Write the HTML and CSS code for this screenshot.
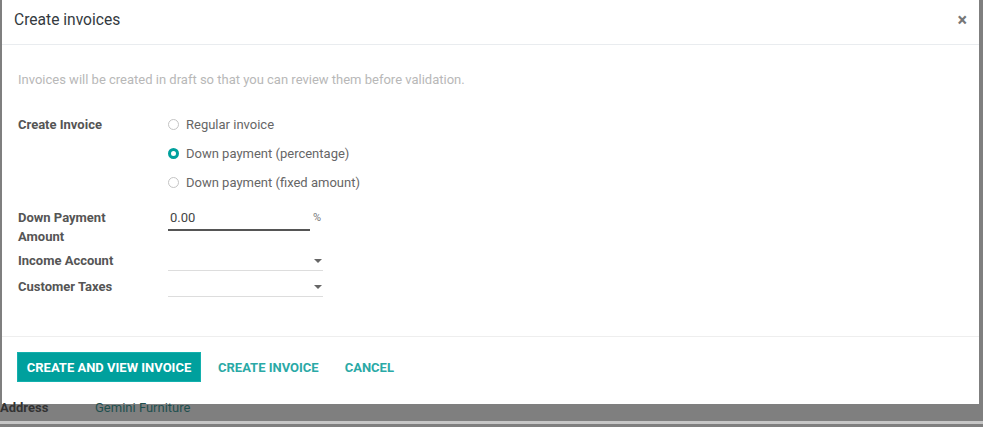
FILE: index.html
```html
<!DOCTYPE html>
<html lang="en">
  <head>
    <meta charset="UTF-8" />
    <meta name="viewport" content="width=device-width, initial-scale=1.0" />
    <title>Create invoices</title>
    <link rel="stylesheet" href="styles.css">
  </head>
  <body>
    <div class="modal">
      <div class="modal-header">
        <h4 class="modal-title">Create invoices</h4>
        <span class="close">&times;</span>
      </div>

      <div class="modal-body">
        <p class="help">Invoices will be created in draft so that you can review them before validation.</p>

        <div class="field invoice-type">
          <label class="field-label">Create Invoice</label>
          <div class="radios">
            <div class="radio"><span class="dot"></span>Regular invoice</div>
            <div class="radio"><span class="dot checked"></span>Down payment (percentage)</div>
            <div class="radio"><span class="dot"></span>Down payment (fixed amount)</div>
          </div>
        </div>

        <div class="field amount">
          <label class="field-label">Down Payment<br />Amount</label>
          <div class="amount-input">
            <span class="input">0.00</span>
            <span class="unit">%</span>
          </div>
        </div>

        <div class="field select-row">
          <label class="field-label">Income Account</label>
          <div class="select"><span class="caret"></span></div>
        </div>

        <div class="field select-row">
          <label class="field-label">Customer Taxes</label>
          <div class="select"><span class="caret"></span></div>
        </div>
      </div>

      <div class="modal-footer">
        <button class="btn btn-primary">Create and View Invoice</button>
        <button class="btn btn-link">Create Invoice</button>
        <button class="btn btn-link">Cancel</button>
      </div>
    </div>

    <div class="backdrop-row">
      <span class="bg-label">Address</span>
      <span class="bg-value">Gemini Furniture</span>
    </div>
  </body>
</html>
```

FILE: styles.css
```css
body {
  margin: 0;
  background: #7f7f7f;
  font-family: Roboto, "Liberation Sans", sans-serif;
  font-size: 13px;
  color: #4c4c4c;
}
.modal {
  margin-left: 2px;
  width: 977px;
  height: 404px;
  background: #fff;
  display: flex;
  flex-direction: column;
}
.modal-header {
  height: 45px;
  box-sizing: border-box;
  padding: 0 12px 4px 12px;
  display: flex;
  align-items: center;
  justify-content: space-between;
  border-bottom: 1px solid #e9ecef;
}
.modal-title {
  margin: 0;
  font-size: 15.6px;
  font-weight: normal;
  color: #343a40;
}
.close {
  font-size: 18px;
  font-weight: bold;
  color: #777;
  line-height: 1;
}
.modal-body {
  height: 292px;
  box-sizing: border-box;
  padding: 26px 16px 0 16px;
  border-bottom: 1px solid #eeeeee;
}
.help {
  margin: 0 0 21px 0;
  line-height: 18px;
  color: #b8b8b8;
}
.field {
  display: flex;
}
.field-label {
  width: 150px;
  flex: none;
  font-weight: bold;
  line-height: 19px;
  color: #555;
}
.invoice-type .field-label {
  margin-top: 5px;
}
.radio {
  height: 29px;
  display: flex;
  align-items: center;
  color: #666;
}
.dot {
  width: 11px;
  height: 11px;
  box-sizing: border-box;
  border: 1px solid #c4c4c4;
  border-radius: 50%;
  margin-right: 7px;
}
.dot.checked {
  border: 3.5px solid #00a09d;
  background: #fff;
}
.amount {
  margin-top: 11px;
}
.amount-input {
  display: flex;
  align-items: flex-start;
}
.input {
  width: 142px;
  height: 23px;
  box-sizing: border-box;
  padding-left: 2px;
  border-bottom: 2px solid #555;
  line-height: 19px;
  color: #444;
}
.unit {
  margin-left: 3px;
  font-size: 11px;
  line-height: 19px;
  color: #777;
}
.select-row {
  margin-top: 5px;
}
.select-row + .select-row {
  margin-top: 6px;
}
.select {
  width: 155px;
  height: 20px;
  box-sizing: border-box;
  border-bottom: 1px solid #ddd;
  display: flex;
  justify-content: flex-end;
  align-items: center;
}
.caret {
  width: 0;
  height: 0;
  margin-right: 1px;
  border-left: 4px solid transparent;
  border-right: 4px solid transparent;
  border-top: 4px solid #666;
}
.modal-footer {
  padding: 15px 15px;
  display: flex;
  align-items: flex-start;
}
.btn {
  height: 30px;
  border: 0;
  background: none;
  font-family: Roboto, "Liberation Sans", sans-serif;
  font-size: 13px;
  font-weight: bold;
  text-transform: uppercase;
  cursor: pointer;
}
.btn-primary {
  width: 184px;
  padding: 0;
  background: #00a09d;
  color: #fff;
  border: 1px solid #13b0ad;
}
.btn-link {
  color: #2aa9a6;
  padding: 0 13px;
  margin-left: 4px;
}
.btn-link + .btn-link {
  margin-left: 0;
}
.backdrop-row {
  height: 20px;
  box-sizing: border-box;
  padding-bottom: 10px;
  display: flex;
  align-items: center;
  font-size: 13px;
  border-bottom: 3px solid #c6c6c6;
}
.bg-label {
  width: 95px;
  font-weight: bold;
  color: #333;
}
.bg-value {
  color: #1f504f;
}
```
